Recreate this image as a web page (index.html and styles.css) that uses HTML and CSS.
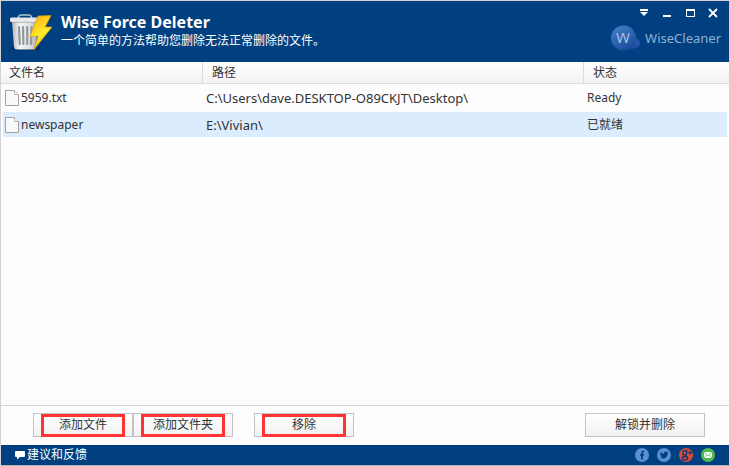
FILE: index.html
```html
<!DOCTYPE html>
<html lang="zh-CN">
<head>
    <meta charset="UTF-8">
    <meta name="viewport" content="width=device-width, initial-scale=1.0">
    <title>Wise Force Deleter</title>
    <link rel="stylesheet" href="styles.css">
</head>
<body>
    <div class="window">
        <header class="title-bar">
            <svg class="app-icon" viewBox="0 0 44 40" aria-hidden="true">
                <defs>
                    <linearGradient id="can" x1="0" x2="1">
                        <stop offset="0" stop-color="#b4b8bb"/>
                        <stop offset="0.3" stop-color="#f4f4f4"/>
                        <stop offset="0.7" stop-color="#dcdedf"/>
                        <stop offset="1" stop-color="#a4a8ac"/>
                    </linearGradient>
                    <linearGradient id="bolt" x1="0" y1="0" x2="0.4" y2="1">
                        <stop offset="0" stop-color="#f9a51a"/>
                        <stop offset="0.4" stop-color="#ffd21c"/>
                        <stop offset="0.65" stop-color="#fff02c"/>
                        <stop offset="1" stop-color="#f2b705"/>
                    </linearGradient>
                </defs>
                <ellipse cx="17" cy="35.500" rx="16" ry="2.500" fill="#00285c" opacity="0.6"/>
                <path d="M9.500 5.500 V4 Q10 2 12 2 H20 Q22 2 22.500 4 V5.500" fill="none" stroke="#b9c4ce" stroke-width="1.600"/>
                <path d="M3 8 L5 34 Q5.300 36.500 8 36.500 H24 Q26.700 36.500 27 34 L29 8 Z" fill="url(#can)"/>
                <rect x="1" y="4.500" width="30" height="4.500" rx="1.500" fill="#e6e8e9"/>
                <path d="M3 9.300 H29" stroke="#a2a7ab" stroke-width="0.800"/>
                <g stroke="#94989c" stroke-width="2.200" stroke-linecap="round">
                    <path d="M10 14 L10.800 31"/>
                    <path d="M14 14 L14.400 31"/>
                    <path d="M18.200 14 V31"/>
                    <path d="M22.500 14 L22 31"/>
                </g>
                <path d="M29 3 L42 2.500 L36 14 L43 14 L25 36.500 L29 23 L21 23.500 Z" fill="url(#bolt)" stroke="#e09a10" stroke-width="0.700"/>
            </svg>
            <div class="titles">
                <h1>Wise Force Deleter</h1>
                <p>一个简单的方法帮助您删除无法正常删除的文件。</p>
            </div>
            <div class="title-side">
                <div class="window-controls">
                    <button type="button" aria-label="菜单">
                        <svg viewBox="0 0 12 12"><path d="M2 2h8v2H2z M2 5h8L6 9z" fill="#fff"/></svg>
                    </button>
                    <button type="button" aria-label="最小化">
                        <svg viewBox="0 0 12 12"><path d="M2 8h8v2H2z" fill="#fff"/></svg>
                    </button>
                    <button type="button" aria-label="最大化">
                        <svg viewBox="0 0 12 12"><path d="M2 2h9v8H2z M3 4v5h7V4z" fill="#fff" fill-rule="evenodd"/></svg>
                    </button>
                    <button type="button" aria-label="关闭">
                        <svg viewBox="0 0 12 12"><path d="M2 2l8 8M10 2l-8 8" stroke="#fff" stroke-width="1.800"/></svg>
                    </button>
                </div>
                <a href="#" class="brand">
                    <svg viewBox="0 0 30 26" aria-hidden="true">
                        <defs>
                            <linearGradient id="ball" x1="0" y1="0" x2="0.600" y2="1">
                                <stop offset="0" stop-color="#4584c8"/>
                                <stop offset="1" stop-color="#1c4ba0"/>
                            </linearGradient>
                        </defs>
                        <circle cx="24.500" cy="18" r="4.500" fill="#2456a8"/>
                        <path d="M18 22 Q22 22.500 26 21" stroke="#2050a4" stroke-width="3" fill="none"/>
                        <circle cx="12.500" cy="13" r="12.500" fill="url(#ball)"/>
                        <text class="brand-letter" x="12" y="18" text-anchor="middle">W</text>
                    </svg>
                    <span>WiseCleaner</span>
                </a>
            </div>
        </header>

        <main class="file-list">
            <table>
                <colgroup>
                    <col class="col-name">
                    <col class="col-path">
                    <col>
                </colgroup>
                <thead>
                    <tr>
                        <th>文件名</th>
                        <th>路径</th>
                        <th>状态</th>
                    </tr>
                </thead>
                <tbody>
                    <tr>
                        <td>
                            <div class="file-name">
                                <svg viewBox="0 0 14 16"><path d="M0.500 0.500H9.500L13.500 4.500V15.500H0.500Z" fill="#fafafa" stroke="#a0a0a0"/><path d="M9.500 0.500V4.500H13.500" fill="#fff" stroke="#b4b4b4"/></svg>
                                <span>5959.txt</span>
                            </div>
                        </td>
                        <td class="path">C:\Users\dave.DESKTOP-O89CKJT\Desktop\</td>
                        <td>Ready</td>
                    </tr>
                    <tr class="selected">
                        <td>
                            <div class="file-name">
                                <svg viewBox="0 0 14 16"><path d="M0.500 0.500H9.500L13.500 4.500V15.500H0.500Z" fill="#fafafa" stroke="#a0a0a0"/><path d="M9.500 0.500V4.500H13.500" fill="#fff" stroke="#b4b4b4"/></svg>
                                <span>newspaper</span>
                            </div>
                        </td>
                        <td class="path">E:\Vivian\</td>
                        <td>已就绪</td>
                    </tr>
                </tbody>
            </table>
        </main>

        <div class="actions">
            <div class="add-group">
                <button type="button" class="btn marked">添加文件</button>
                <button type="button" class="btn marked">添加文件夹</button>
            </div>
            <button type="button" class="btn marked">移除</button>
            <button type="button" class="btn btn-unlock">解锁并删除</button>
        </div>

        <footer class="status-bar">
            <a href="#" class="feedback">
                <svg viewBox="0 0 10 10" aria-hidden="true"><path d="M1 1h8q1 0 1 1v4q0 1-1 1H5L2 9.500V7H1Q0 7 0 6V2q0-1 1-1z" fill="#fff"/></svg>
                <span>建议和反馈</span>
            </a>
            <nav class="social">
                <a href="#" aria-label="Facebook">
                    <svg viewBox="0 0 14 14"><circle cx="7" cy="7" r="7" fill="#5a8fd0"/><path d="M9.300 3.500H8.500Q7 3.500 7 5V11.500M5.200 6.800H9" fill="none" stroke="#00407f" stroke-width="1.700"/></svg>
                </a>
                <a href="#" aria-label="Twitter">
                    <svg viewBox="0 0 14 14"><circle cx="7" cy="7" r="7" fill="#5a8fd0"/><path d="M3.500 4Q5 5.700 7 5.700Q6.900 3.500 8.800 3.500Q9.600 3.500 10.100 4L11.200 3.700L10.700 5Q10.800 8.500 8.300 9.900Q5.700 11.200 3 9.700Q4.500 9.700 5.200 9Q4 8.700 3.700 7.700H4.300Q3.200 7 3.200 5.900L3.700 6Q2.900 5 3.500 4Z" fill="#00407f"/></svg>
                </a>
                <a href="#" aria-label="Google+">
                    <svg viewBox="0 0 14 14"><circle cx="7" cy="7" r="7" fill="#d84a38"/><g fill="none" stroke="#123a70" stroke-width="1.300"><ellipse cx="5.800" cy="4.900" rx="2" ry="2.200"/><path d="M5.500 2.700H8.500M6.500 7.100L8 8.700"/><ellipse cx="6" cy="10.300" rx="2.700" ry="1.800"/><path d="M9.200 4.700H13M11.100 2.800V6.600"/></g></svg>
                </a>
                <a href="#" aria-label="Email">
                    <svg viewBox="0 0 14 14"><circle cx="7" cy="7" r="7" fill="#4fbb50"/><path d="M3 4H11V10H3Z" fill="#fff"/><path d="M3 4L7 7.700L11 4M3 10L5.700 7M11 10L8.300 7" fill="none" stroke="#4fbb50" stroke-width="0.800"/></svg>
                </a>
            </nav>
        </footer>
    </div>
</body>
</html>
```
FILE: styles.css
```css
* {
    box-sizing: border-box;
}

body {
    margin: 0;
    font-family: "Noto Sans", "Noto Sans CJK SC", sans-serif;
    font-size: 12px;
    line-height: 16px;
    color: #333;
    background-color: #fff;
}

button {
    font: inherit;
    color: inherit;
    cursor: pointer;
}

a {
    color: #fff;
    text-decoration: none;
}

svg {
    display: block;
    flex: none;
}

.window {
    display: flex;
    flex-direction: column;
    min-height: 100vh;
    border: 1px solid #d2d2d2;
    border-bottom-color: #b4b4b4;
    background-color: #fdfdfd;
}

/* Title bar */
.title-bar {
    display: flex;
    height: 61px;
    padding: 0 8px;
    background-color: #004080;
    color: #fff;
}

.app-icon {
    width: 44px;
    height: 40px;
    margin-top: 12px;
}

.titles {
    flex: 1;
    padding: 10px 8px 0;
}

.titles h1 {
    margin: 0;
    font-size: 16px;
    font-weight: bold;
    line-height: 22px;
}

.titles p {
    margin: 0;
}

.title-side {
    display: flex;
    flex-direction: column;
    align-items: flex-end;
}

.window-controls {
    display: flex;
    gap: 11px;
    padding: 6px 2px 0 0;
}

.window-controls button {
    padding: 0;
    border: none;
    background: none;
}

.window-controls svg {
    width: 12px;
    height: 12px;
}

.brand {
    display: flex;
    align-items: center;
    gap: 4px;
    margin-top: 6px;
    font-size: 13px;
    color: #8fb0d4;
}

.brand svg {
    width: 30px;
    height: 26px;
}

.brand-letter {
    font-size: 15px;
    fill: #a3bfde;
}

/* File list */
.file-list {
    flex: 1;
}

table {
    width: 100%;
    table-layout: fixed;
    border-collapse: separate;
    border-spacing: 0;
}

.col-name {
    width: 202px;
}

.col-path {
    width: 381px;
}

th {
    height: 22px;
    padding: 0 9px;
    border-right: 1px solid #dcdcdc;
    border-bottom: 1px solid #dcdcdc;
    background: linear-gradient(#fff, #f3f3f3);
    font-weight: normal;
    text-align: left;
}

th:first-child {
    padding-left: 8px;
}

th:last-child {
    border-right: none;
}

td {
    height: 27px;
    padding: 0 3px;
    border-top: 1px solid transparent;
    border-bottom: 1px solid transparent;
    background-clip: padding-box;
}

td:first-child {
    padding-left: 2px;
    border-left: 2px solid transparent;
}

td:last-child {
    border-right: 2px solid transparent;
}

.path {
    font-size: 13px;
}

.selected td {
    background-color: #dbecff;
}

.file-name {
    display: flex;
    align-items: center;
    gap: 2px;
}

.file-name svg {
    width: 14px;
    height: 16px;
}

/* Buttons */
.actions {
    display: flex;
    gap: 21px;
    padding: 7px 24px 8px 32px;
    border-top: 1px solid #d5d5d5;
}

.add-group {
    display: flex;
}

.btn {
    position: relative;
    width: 100px;
    height: 24px;
    padding: 0;
    border: 1px solid #c3c3c3;
    background: linear-gradient(#fff, #f1f1f1);
}

.btn-unlock {
    width: 120px;
    margin-left: auto;
}

.marked::after {
    content: "";
    position: absolute;
    inset: 0 7px -1px;
    border: 3px solid #ff3334;
}

/* Status bar */
.status-bar {
    display: flex;
    align-items: center;
    justify-content: space-between;
    height: 20px;
    padding: 0 14px;
    background-color: #004080;
}

.feedback {
    display: flex;
    align-items: center;
    gap: 2px;
}

.feedback svg {
    width: 10px;
    height: 10px;
}

.social {
    display: flex;
    gap: 8px;
}

.social svg {
    width: 14px;
    height: 14px;
}
```
